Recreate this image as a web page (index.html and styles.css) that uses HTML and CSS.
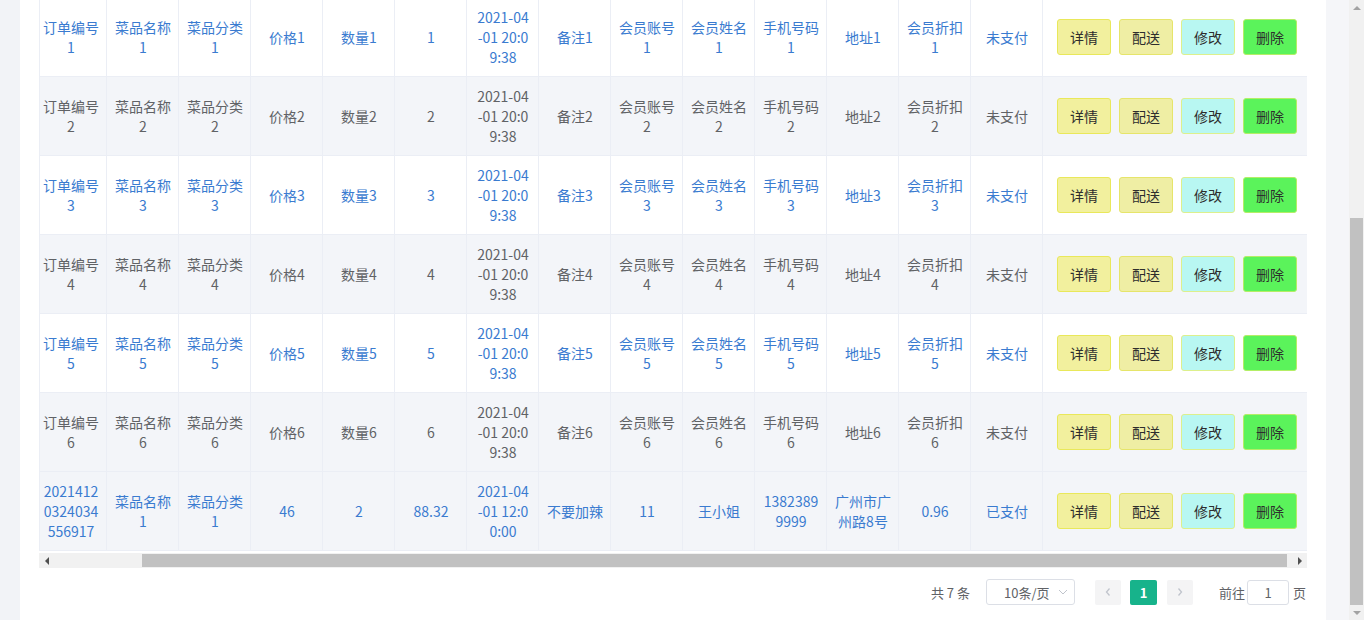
FILE: index.html
```html
<!DOCTYPE html>
<html lang="zh-CN">
<head>
<meta charset="utf-8">
<title>订单列表</title>
<link rel="stylesheet" href="styles.css">
</head>
<body>
<div class="page">
  <div class="gutter-left"></div>
  <main class="panel">
    <div class="table-clip">
      <table class="grid">
        <colgroup>
          <col class="c"><col class="c"><col class="c"><col class="c"><col class="c"><col class="c"><col class="c">
          <col class="c"><col class="c"><col class="c"><col class="c"><col class="c"><col class="c"><col class="c">
          <col class="c-actions">
        </colgroup>
        <tbody>
          <tr>
            <td><div class="cell">订单编号1</div></td><td><div class="cell">菜品名称1</div></td><td><div class="cell">菜品分类1</div></td><td><div class="cell">价格1</div></td><td><div class="cell">数量1</div></td><td><div class="cell">1</div></td><td><div class="cell">2021-04-01 20:09:38</div></td><td><div class="cell">备注1</div></td><td><div class="cell">会员账号1</div></td><td><div class="cell">会员姓名1</div></td><td><div class="cell">手机号码1</div></td><td><div class="cell">地址1</div></td><td><div class="cell">会员折扣1</div></td><td><div class="cell">未支付</div></td>
            <td class="actions"><div class="btns"><button class="btn btn-detail">详情</button><button class="btn btn-ship">配送</button><button class="btn btn-edit">修改</button><button class="btn btn-del">删除</button></div></td>
          </tr>
          <tr>
            <td><div class="cell">订单编号2</div></td><td><div class="cell">菜品名称2</div></td><td><div class="cell">菜品分类2</div></td><td><div class="cell">价格2</div></td><td><div class="cell">数量2</div></td><td><div class="cell">2</div></td><td><div class="cell">2021-04-01 20:09:38</div></td><td><div class="cell">备注2</div></td><td><div class="cell">会员账号2</div></td><td><div class="cell">会员姓名2</div></td><td><div class="cell">手机号码2</div></td><td><div class="cell">地址2</div></td><td><div class="cell">会员折扣2</div></td><td><div class="cell">未支付</div></td>
            <td class="actions"><div class="btns"><button class="btn btn-detail">详情</button><button class="btn btn-ship">配送</button><button class="btn btn-edit">修改</button><button class="btn btn-del">删除</button></div></td>
          </tr>
          <tr>
            <td><div class="cell">订单编号3</div></td><td><div class="cell">菜品名称3</div></td><td><div class="cell">菜品分类3</div></td><td><div class="cell">价格3</div></td><td><div class="cell">数量3</div></td><td><div class="cell">3</div></td><td><div class="cell">2021-04-01 20:09:38</div></td><td><div class="cell">备注3</div></td><td><div class="cell">会员账号3</div></td><td><div class="cell">会员姓名3</div></td><td><div class="cell">手机号码3</div></td><td><div class="cell">地址3</div></td><td><div class="cell">会员折扣3</div></td><td><div class="cell">未支付</div></td>
            <td class="actions"><div class="btns"><button class="btn btn-detail">详情</button><button class="btn btn-ship">配送</button><button class="btn btn-edit">修改</button><button class="btn btn-del">删除</button></div></td>
          </tr>
          <tr>
            <td><div class="cell">订单编号4</div></td><td><div class="cell">菜品名称4</div></td><td><div class="cell">菜品分类4</div></td><td><div class="cell">价格4</div></td><td><div class="cell">数量4</div></td><td><div class="cell">4</div></td><td><div class="cell">2021-04-01 20:09:38</div></td><td><div class="cell">备注4</div></td><td><div class="cell">会员账号4</div></td><td><div class="cell">会员姓名4</div></td><td><div class="cell">手机号码4</div></td><td><div class="cell">地址4</div></td><td><div class="cell">会员折扣4</div></td><td><div class="cell">未支付</div></td>
            <td class="actions"><div class="btns"><button class="btn btn-detail">详情</button><button class="btn btn-ship">配送</button><button class="btn btn-edit">修改</button><button class="btn btn-del">删除</button></div></td>
          </tr>
          <tr>
            <td><div class="cell">订单编号5</div></td><td><div class="cell">菜品名称5</div></td><td><div class="cell">菜品分类5</div></td><td><div class="cell">价格5</div></td><td><div class="cell">数量5</div></td><td><div class="cell">5</div></td><td><div class="cell">2021-04-01 20:09:38</div></td><td><div class="cell">备注5</div></td><td><div class="cell">会员账号5</div></td><td><div class="cell">会员姓名5</div></td><td><div class="cell">手机号码5</div></td><td><div class="cell">地址5</div></td><td><div class="cell">会员折扣5</div></td><td><div class="cell">未支付</div></td>
            <td class="actions"><div class="btns"><button class="btn btn-detail">详情</button><button class="btn btn-ship">配送</button><button class="btn btn-edit">修改</button><button class="btn btn-del">删除</button></div></td>
          </tr>
          <tr>
            <td><div class="cell">订单编号6</div></td><td><div class="cell">菜品名称6</div></td><td><div class="cell">菜品分类6</div></td><td><div class="cell">价格6</div></td><td><div class="cell">数量6</div></td><td><div class="cell">6</div></td><td><div class="cell">2021-04-01 20:09:38</div></td><td><div class="cell">备注6</div></td><td><div class="cell">会员账号6</div></td><td><div class="cell">会员姓名6</div></td><td><div class="cell">手机号码6</div></td><td><div class="cell">地址6</div></td><td><div class="cell">会员折扣6</div></td><td><div class="cell">未支付</div></td>
            <td class="actions"><div class="btns"><button class="btn btn-detail">详情</button><button class="btn btn-ship">配送</button><button class="btn btn-edit">修改</button><button class="btn btn-del">删除</button></div></td>
          </tr>
          <tr class="is-hover">
            <td><div class="cell">20214120324034556917</div></td><td><div class="cell">菜品名称1</div></td><td><div class="cell">菜品分类1</div></td><td><div class="cell">46</div></td><td><div class="cell">2</div></td><td><div class="cell">88.32</div></td><td><div class="cell">2021-04-01 12:00:00</div></td><td><div class="cell">不要加辣</div></td><td><div class="cell">11</div></td><td><div class="cell">王小姐</div></td><td><div class="cell">13823899999</div></td><td><div class="cell">广州市广州路8号</div></td><td><div class="cell">0.96</div></td><td><div class="cell">已支付</div></td>
            <td class="actions"><div class="btns"><button class="btn btn-detail">详情</button><button class="btn btn-ship">配送</button><button class="btn btn-edit">修改</button><button class="btn btn-del">删除</button></div></td>
          </tr>
        </tbody>
      </table>
    </div>
    <div class="hscroll">
      <div class="sb-btn"><span class="tri tri-left"></span></div>
      <div class="hscroll-track"><div class="hscroll-thumb"></div></div>
      <div class="sb-btn"><span class="tri tri-right"></span></div>
    </div>
    <div class="pager">
      <span class="total">共 7 条</span>
      <div class="size-select"><span class="size-text">10条/页</span><svg class="chev" width="10" height="6" viewBox="0 0 10 6"><path d="M1 1l4 4 4-4" fill="none" stroke="#c0c4cc" stroke-width="1"/></svg></div>
      <button class="pg-btn pg-prev"><svg width="8" height="10" viewBox="0 0 8 10"><path d="M5.5 1.5L2.5 5l3 3.5" fill="none" stroke="#c0c4cc" stroke-width="1.3"/></svg></button>
      <button class="pg-btn pg-num is-active">1</button>
      <button class="pg-btn pg-next"><svg width="8" height="10" viewBox="0 0 8 10"><path d="M2.5 1.5L5.5 5l-3 3.5" fill="none" stroke="#c0c4cc" stroke-width="1.3"/></svg></button>
      <span class="jump-label">前往</span>
      <div class="jump-input">1</div>
      <span class="jump-unit">页</span>
    </div>
  </main>
  <div class="gutter-right"></div>
  <div class="vscroll">
    <div class="vsb-btn"><span class="tri tri-up"></span></div>
    <div class="vscroll-track"><div class="vscroll-thumb"></div></div>
    <div class="vsb-btn"><span class="tri tri-down"></span></div>
  </div>
</div>
</body>
</html>
```
FILE: styles.css
```css
* { box-sizing: border-box; }
html, body { margin: 0; padding: 0; }
body {
  font-family: "Noto Sans CJK SC", "Noto Sans", sans-serif;
  background: #f2f3f7;
  overflow: hidden;
}
.page { display: flex; height: 620px; overflow: hidden; }
.gutter-left { width: 20px; flex: none; }
.panel { width: 1306px; flex: none; background: #fff; padding-left: 19px; }
.gutter-right { flex: 1; background: #f5f6f9; }

/* table */
.table-clip {
  width: 1268px;
  overflow: hidden;
  margin-top: -2px;
  border-left: 1px solid #ebeef5;
}
.grid {
  border-collapse: separate;
  border-spacing: 0;
  table-layout: fixed;
  width: 1272px;
  margin-left: -5px;
}
.grid col.c { width: 72px; }
.grid col.c-actions { width: 264px; }
.grid td {
  padding: 9px 0;
  border-right: 1px solid #ebeef5;
  border-bottom: 1px solid #ebeef5;
  text-align: center;
  vertical-align: middle;
  font-size: 14px;
  line-height: 20px;
  color: #3a7bd0;
  background: #fff;
}
.grid tr:nth-child(even) td { background: #f3f5f9; color: #606266; }
.grid tr.is-hover td { background: #f3f5f9; }
.grid td.actions { border-right: none; }
.cell { padding: 0 7px 0 8px; word-break: break-all; }
.btns { display: flex; gap: 8px; padding-left: 14px; }
.btn {
  width: 54px;
  height: 36px;
  padding: 0;
  border: 1px solid;
  border-radius: 3px;
  font-family: inherit;
  font-size: 14px;
  color: #2d2d2d;
  display: flex;
  align-items: center;
  justify-content: center;
}
.btn-detail { background: #f2f09e; border-color: #e9e85a; }
.btn-ship { background: #efeea4; border-color: #e6e56a; }
.btn-edit { background: #b8f7f2; border-color: #ddf08c; }
.btn-del { background: #5bf35b; border-color: #b4ee66; }

/* horizontal scrollbar */
.hscroll {
  width: 1268px;
  height: 15px;
  margin-top: 2px;
  background: #f1f1f1;
  display: flex;
}
.sb-btn { width: 15px; flex: none; display: flex; align-items: center; justify-content: center; }
.hscroll-track { flex: 1; display: flex; padding: 1px 5px 1px 88px; }
.hscroll-thumb { flex: 1; background: #c1c1c1; }
.tri { width: 0; height: 0; display: block; }
.tri-left { border-top: 4px solid transparent; border-bottom: 4px solid transparent; border-right: 4px solid #505050; }
.tri-right { border-top: 4px solid transparent; border-bottom: 4px solid transparent; border-left: 4px solid #505050; }
.tri-up { border-left: 4px solid transparent; border-right: 4px solid transparent; border-bottom: 4px solid #a3a3a3; }
.tri-down { border-left: 4px solid transparent; border-right: 4px solid transparent; border-top: 4px solid #a3a3a3; }

/* pager */
.pager {
  width: 1268px;
  display: flex;
  justify-content: flex-end;
  align-items: center;
  padding-top: 11px;
  padding-right: 1px;
  font-size: 13px;
  color: #606266;
}
.total { margin-right: 16px; }
.size-select {
  width: 89px;
  height: 26px;
  border: 1px solid #dcdfe6;
  border-radius: 3px;
  display: flex;
  align-items: center;
  padding-left: 17px;
  padding-right: 6px;
  color: #606266;
}
.size-text { flex: 1; }
.pg-btn {
  width: 26px;
  height: 25px;
  border: none;
  border-radius: 2px;
  background: #f4f4f5;
  padding: 0;
  margin-left: 10px;
  display: flex;
  align-items: center;
  justify-content: center;
  font-family: inherit;
  font-size: 13px;
}
.pg-prev { margin-left: 20px; }
.pg-num.is-active { width: 27px; margin-left: 9px; background: #17b38b; color: #fff; font-weight: 700; }
.jump-label { margin-left: 26px; }
.jump-input {
  width: 42px;
  height: 25px;
  margin-left: 2px;
  border: 1px solid #dcdfe6;
  border-radius: 3px;
  display: flex;
  align-items: center;
  justify-content: center;
  color: #606266;
}
.jump-unit { margin-left: 4px; }

/* vertical scrollbar */
.vscroll {
  width: 15px;
  flex: none;
  background: #f1f1f1;
  display: flex;
  flex-direction: column;
}
.vsb-btn { height: 15px; flex: none; display: flex; align-items: center; justify-content: center; }
.vscroll-track { flex: 1; padding: 203px 1px 0 1px; display: flex; }
.vscroll-thumb { flex: 1; background: #c1c1c1; }
```
